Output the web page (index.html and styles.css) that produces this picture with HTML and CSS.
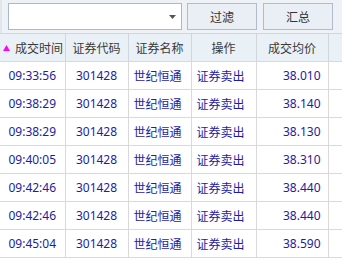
FILE: index.html
```html
<!DOCTYPE html>
<html lang="zh-CN">
<head>
    <meta charset="UTF-8">
    <title>成交查询</title>
    <link rel="stylesheet" href="styles.css">
</head>
<body>
    <div class="toolbar">
        <div class="combo">
            <svg class="combo-arrow" width="7" height="4" viewBox="0 0 7 4"><path d="M0 0H7L3.5 4Z" fill="#555"/></svg>
        </div>
        <button class="tool-button">过滤</button>
        <button class="tool-button">汇总</button>
    </div>

    <table class="grid">
        <colgroup>
            <col class="c-time">
            <col class="c-code">
            <col class="c-name">
            <col class="c-op">
            <col class="c-price">
            <col>
        </colgroup>
        <thead>
            <tr>
                <th class="sorted"><svg class="sort-mark" width="7" height="6" viewBox="0 0 7 6"><path d="M3.5 0L7 6H0Z" fill="#ff00ff"/></svg><span>成交时间</span></th>
                <th>证券代码</th>
                <th>证券名称</th>
                <th>操作</th>
                <th>成交均价</th>
                <th></th>
            </tr>
        </thead>
        <tbody id="rows"></tbody>
    </table>

    <script>
        // 成交记录
        const trades = [
            ['09:33:56', '38.010'],
            ['09:38:29', '38.140'],
            ['09:38:29', '38.130'],
            ['09:40:05', '38.310'],
            ['09:42:46', '38.440'],
            ['09:42:46', '38.440'],
            ['09:45:04', '38.590']
        ];

        const body = document.getElementById('rows');
        trades.forEach(t => {
            const tr = document.createElement('tr');
            tr.innerHTML =
                `<td class="center">${t[0]}</td>` +
                `<td class="center">301428</td>` +
                `<td>世纪恒通</td>` +
                `<td>证券卖出</td>` +
                `<td class="right">${t[1]}</td>` +
                `<td></td>`;
            body.appendChild(tr);
        });
    </script>
</body>
</html>
```

FILE: styles.css
```css
* {
    box-sizing: border-box;
    margin: 0;
    padding: 0;
}

body {
    background: #fff;
    font-family: "Noto Sans", "Noto Sans CJK SC", sans-serif;
    font-size: 12px;
    overflow: hidden;
}

.toolbar {
    display: flex;
    align-items: center;
    gap: 6px;
    height: 33px;
    padding: 0 8px;
    background: #eef2f6;
    border-left: 2px solid #e2e6ea;
}

.combo {
    position: relative;
    width: 174px;
    height: 27px;
    background: #fff;
    border: 1px solid #a9b8ca;
    margin-left: -2px;
    margin-right: -1px;
}

.combo-arrow {
    position: absolute;
    right: 5px;
    top: 11px;
}

.tool-button {
    width: 70px;
    height: 27px;
    background: #e9eff4;
    border: 1px solid #aebccc;
    color: #333;
    font-family: "Noto Sans CJK SC", sans-serif;
    font-size: 12px;
}

.grid {
    width: 100%;
    border-collapse: collapse;
    table-layout: fixed;
}

.c-time { width: 65px; }
.c-code { width: 63px; }
.c-name { width: 63px; }
.c-op { width: 65px; }
.c-price { width: 72px; }

.grid th,
.grid td {
    border-right: 1px solid #d9d9d9;
    border-bottom: 1px solid #d9d9d9;
    white-space: nowrap;
    overflow: hidden;
}

.grid th {
    height: 28px;
    background: #eaf1f6;
    color: #3a3a3a;
    font-family: "Noto Sans CJK SC", sans-serif;
    font-weight: normal;
    text-align: center;
    border-top: 1px solid #d2d6da;
    border-right-color: #d0d6dc;
    border-bottom-color: #d6dade;
}

.grid th.sorted {
    text-align: left;
    padding-left: 3px;
}

.sort-mark {
    vertical-align: 2px;
    margin-right: 5px;
}

.grid td {
    height: 28px;
    color: #1c1ca4;
    padding: 0 5px;
}

.grid td.center {
    text-align: center;
    padding: 0;
}

.grid td.right {
    text-align: right;
    padding-right: 7px;
}

.grid td:last-child,
.grid th:last-child {
    border-right: none;
}
```
